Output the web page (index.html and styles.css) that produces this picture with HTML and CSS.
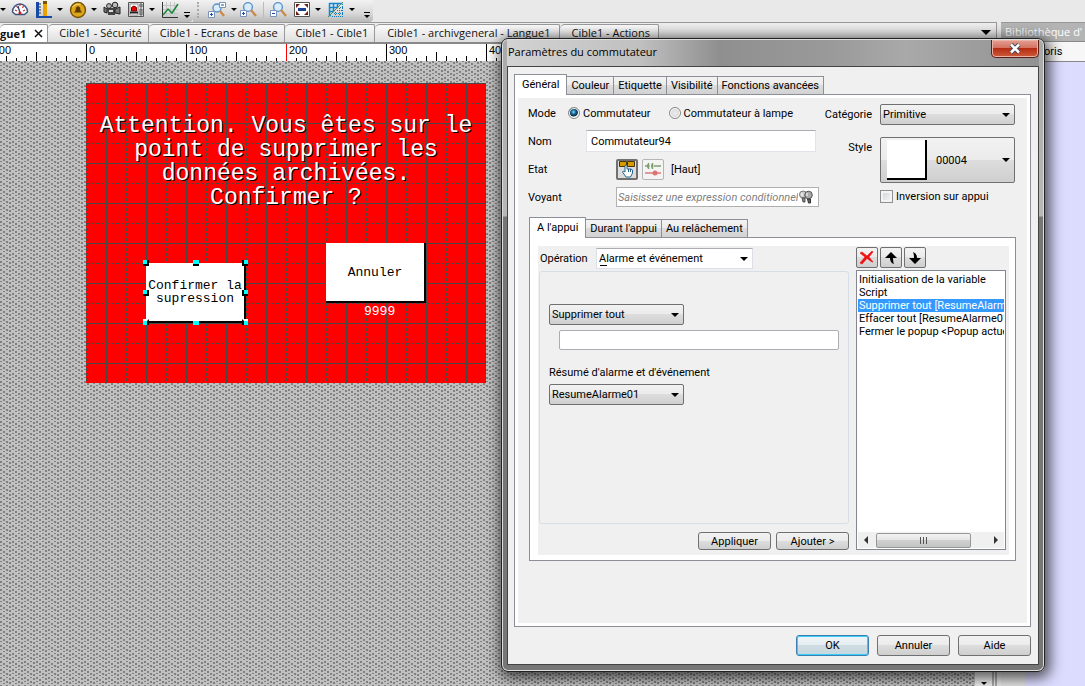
FILE: index.html
```html
<!DOCTYPE html>
<html lang="fr">
<head>
<meta charset="utf-8">
<title>Paramètres du commutateur</title>
<link rel="stylesheet" href="styles.css">
</head>
<body>
<div class="app">
  <header class="toolbars">
    <div class="toolbar toolbar-a">
      <span class="caret"></span>
      <button class="tool" aria-label="Compteur"><svg width="18" height="18" viewBox="0 0 18 18"><path d="M1.500 11a7.500 8 0 1 1 15 0l-3 2.500h-9z" fill="#fff" stroke="#3b4f80" stroke-width="1.4"/><path d="M4 9l2 1M5.500 5l1.500 2M9 3v2M12.500 5l-1 2M14 9l-2 1" stroke="#c33" stroke-width="1.200"/><path d="M9 12L7 5" stroke="#2c3f77" stroke-width="1.3"/><circle cx="9" cy="12" r="1.6" fill="#c22"/></svg></button>
      <button class="tool tool-gap" aria-label="Graphe à barres"><svg width="18" height="18" viewBox="0 0 18 18"><path d="M1 1h3v14h13v2H1z" fill="#1749a6"/><path d="M4 3h2M4 6h2M4 9h2M4 12h2" stroke="#333"/><path d="M8 3h4v12H8z" fill="#e9a300"/><path d="M8 0h4v3H8z" fill="#7a5200"/></svg></button>
      <span class="caret"></span>
      <button class="tool tool-gap" aria-label="Alarme"><svg width="18" height="18" viewBox="0 0 18 18"><circle cx="9" cy="9" r="7.500" fill="#dda51a" stroke="#775106" stroke-width="1.4"/><path d="M5 11.500h8l-1.500-2-.5-3-2-1.500-2 1.500-.5 3z" fill="#5d3b00"/><path d="M3.500 6q3-4 8-3" stroke="#ffe27a" fill="none"/></svg></button>
      <span class="caret"></span>
      <button class="tool tool-gap" aria-label="Caméra"><svg width="18" height="18" viewBox="0 0 18 18"><path d="M4 7h8v7H5z" fill="#444"/><circle cx="6" cy="5" r="2.4" fill="#bbb" stroke="#222"/><circle cx="12" cy="4" r="2.8" fill="#bbb" stroke="#222"/><path d="M12 8l5-2v7l-5-1zM1 6l3 2v4l-3-1z" fill="#777" stroke="#222"/><path d="M6 9h4v2H6z" fill="#ddd"/></svg></button>
      <button class="tool tool-gap" aria-label="Voyant"><svg width="18" height="18" viewBox="0 0 18 18"><path d="M1.500 1.500h15v14h-15z" fill="#ddd" stroke="#555"/><path d="M3 3h8v11H3z" fill="#fff" stroke="#999"/><path d="M4.500 10V6.500q2.500-3 5 0V10z" fill="#e00" stroke="#700"/><path d="M3 11.500h8" stroke="#222" stroke-width="2"/><path d="M13 3h2v3h-2zM13 8h2v6h-2z" fill="#999" stroke="#666"/></svg></button>
      <span class="caret"></span>
      <button class="tool tool-gap" aria-label="Courbe"><svg width="18" height="18" viewBox="0 0 18 18"><path d="M5.500 1v15M9.500 1v15M13.500 1v15M2 4.500h15M2 8.500h15M2 12.500h15" stroke="#c4c4c4"/><path d="M1.500 1v15.500H17" stroke="#333" fill="none"/><path d="M2 14l5-6 4 4 6-9" stroke="#168a3a" stroke-width="1.500" fill="none"/></svg></button>
      <span class="overflow"></span>
    </div>
    <div class="toolbar toolbar-b">
      <span class="grip"></span>
      <button class="tool" aria-label="Zoom"><svg width="20" height="18" viewBox="0 0 20 18"><circle cx="10" cy="7" r="4" fill="#d9ecfb" stroke="#5b91c9" stroke-width="1.400"/><path d="M13 10l4 5" stroke="#c98a4c" stroke-width="2.400"/><path d="M1.500 10.500h6v6h-6zM12.500 1.500h6v5h-6z" fill="#fff" stroke="#7b93bb"/><path d="M3 13.500h3M4.500 12v3M14 4h3" stroke="#1d4da0"/></svg></button>
      <span class="caret"></span>
      <button class="tool tool-near" aria-label="Zoom avant"><svg width="18" height="18" viewBox="0 0 18 18"><circle cx="9" cy="6" r="4.400" fill="#d9ecfb" stroke="#5b91c9" stroke-width="1.400"/><path d="M12 9l5 6" stroke="#c98a4c" stroke-width="2.400"/><path d="M1.500 9.500h6v6h-6z" fill="#fff" stroke="#7b93bb"/><path d="M3 12.500h3M4.500 11v3" stroke="#1d4da0"/></svg></button>
      <span class="divider"></span>
      <button class="tool" aria-label="Zoom arrière"><svg width="18" height="18" viewBox="0 0 18 18"><circle cx="9" cy="6" r="4.400" fill="#d9ecfb" stroke="#5b91c9" stroke-width="1.400"/><path d="M12 9l5 6" stroke="#c98a4c" stroke-width="2.400"/><path d="M1.500 9.500h6v6h-6z" fill="#fff" stroke="#7b93bb"/><path d="M3 12.500h3" stroke="#1d4da0"/></svg></button>
      <button class="tool tool-gap" aria-label="Ajuster"><svg width="18" height="18" viewBox="0 0 18 18"><path d="M1.500 1.500h15v14h-15z" fill="#fff" stroke="#555"/><path d="M3 3h4L3 7zM15 3h-4l4 4zM3 14h4l-4-4zM15 14h-4l4-4z" fill="#701b16"/><path d="M5 7h8v3H5z" fill="#1c3f91"/></svg></button>
      <span class="caret"></span>
      <button class="tool tool-gap" aria-label="Grille"><svg width="18" height="18" viewBox="0 0 18 18"><path d="M2 2.500h13M2 6.500h9M2 10.500h5M2 14.500h2M2.500 2v13M6.500 2v9M10.500 2v5M14.500 2v1" stroke="#1187d4" stroke-width="1.500"/><path d="M7 12.500h9M10 9.500h6M13 6.500h3M15.500 3v12M12.500 7v8M8.500 11v4M5 15.500h11" stroke="#1177bb" stroke-dasharray="1 1"/><path d="M1 16L16 1" stroke="#4f8a4f"/></svg></button>
      <span class="caret"></span>
      <span class="overflow"></span>
    </div>
  </header>

  <div class="workspace">
    <main class="editor">
      <nav class="doc-tabs">
        <a class="doc-tab doc-active" href="#langue1"><span>gue1</span><svg width="9" height="9" viewBox="0 0 9 9"><path d="M1 1l7 7M8 1L1 8" stroke="#111" stroke-width="1.500"/></svg></a>
        <a class="doc-tab" href="#securite">Cible1 - Sécurité</a>
        <a class="doc-tab" href="#ecrans">Cible1 - Ecrans de base</a>
        <a class="doc-tab" href="#cible1">Cible1 - Cible1</a>
        <a class="doc-tab tab-wide" href="#archiv">Cible1 - archivgeneral - Langue1</a>
        <a class="doc-tab tab-wide" href="#actions">Cible1 - Actions</a>
        <span class="caret tabs-caret"></span>
      </nav>
      <div class="ruler">
        <span class="mark">-100</span><span class="mark">0</span><span class="mark">100</span><span class="mark mark-cursor">200</span><span class="mark">300</span><span class="mark">400</span>
      </div>
      <div class="canvas">
        <svg class="weave" width="100%" height="100%" aria-hidden="true">
          <defs><pattern id="weave" width="12" height="8" patternUnits="userSpaceOnUse"><path fill="#c0c0c0" d="M0 0h12v8H0z"/><path fill="#808080" d="M0 0h2v2H0zM6 0h2v1H6zM3 2h2v2H3zM9 1h2v2H9zM0 4h2v1H0zM6 4h2v2H6zM3 6h2v1H3zM9 5h2v2H9z"/></pattern></defs>
          <rect width="100%" height="100%" fill="url(#weave)"/>
        </svg>
        <section class="screen">
          <svg class="grid" width="100%" height="100%" aria-hidden="true">
            <defs><pattern id="grid" width="40" height="40" patternUnits="userSpaceOnUse"><path d="M20.500 0v40M0 .5h40" stroke="#484848"/><path d="M.5 0v40M0 20.500h40" stroke="#484848" stroke-dasharray="3 2"/></pattern></defs>
            <rect width="100%" height="100%" fill="url(#grid)"/>
          </svg>
          <p class="message">Attention. Vous êtes sur le<br>point de supprimer les<br>données archivées.<br>Confirmer ?</p>
          <button class="hmi hmi-confirm">Confirmer la<br>supression
            <i class="h h-nw"></i><i class="h h-n"></i><i class="h h-ne"></i><i class="h h-w"></i><i class="h h-e"></i><i class="h h-sw"></i><i class="h h-s"></i><i class="h h-se"></i>
          </button>
          <button class="hmi hmi-cancel">Annuler</button>
          <span class="popup-id">9999</span>
        </section>
        <div class="vscroll"><span class="caret"></span></div>
      </div>
    </main>
    <aside class="library">
      <h2 class="library-title">Bibliothèque d'</h2>
      <div class="library-tab">Favoris</div>
      <div class="library-body"></div>
    </aside>
  </div>
</div>

<div class="dialog" role="dialog" aria-labelledby="dlg-title">
  <div class="titlebar">
    <h1 id="dlg-title">Paramètres du commutateur</h1>
    <button class="close" aria-label="Fermer"><svg width="14" height="11" viewBox="0 0 14 11"><path d="M3 1.500l8 8M11 1.500l-8 8" stroke="#434e5f" stroke-width="4.500"/><path d="M3 1.500l8 8M11 1.500l-8 8" stroke="#fff" stroke-width="2.500"/></svg></button>
  </div>
  <div class="client">
    <div class="tabs">
      <button class="tab active">Général</button><button class="tab">Couleur</button><button class="tab">Etiquette</button><button class="tab">Visibilité</button><button class="tab">Fonctions avancées</button>
    </div>
    <div class="page">
      <div class="settings">
        <div class="settings-main">
          <div class="row"><span class="lbl lbl-s">Mode</span>
            <label class="radio radio-first"><input type="radio" name="mode" checked>Commutateur</label>
            <label class="radio"><input type="radio" name="mode">Commutateur à lampe</label></div>
          <div class="row"><label class="lbl lbl-m" for="nom">Nom</label><input class="text nom" id="nom" value="Commutateur94"></div>
          <div class="row"><span class="lbl lbl-l">Etat</span>
            <button class="icon-btn pressed" aria-label="Appui"><svg width="18" height="18" viewBox="0 0 18 18"><path d="M1.500 1.500h7v5h-7zM9.500 1.500h7v5h-7z" fill="#d79b00" stroke="#4b3500"/><path d="M7 5.500q1.500-1 2 0V9h4l1.500 1v3l-2 4H8l-3.500-5 1-1L7 12z" fill="#fff" stroke="#246590"/><path d="M10.500 9v3M12.500 9v3" stroke="#246590"/></svg></button>
            <button class="icon-btn faded" aria-label="Contact"><svg width="18" height="18" viewBox="0 0 18 18"><path d="M1 6h3M10 6h7M4.500 3v6M8.500 3v6" stroke="#7d9f70" stroke-width="1.500"/><path d="M3 4l3 2-3 2zM9 6l-2-2v4z" fill="#7d9f70"/><path d="M1 13h16" stroke="#dd7a7a" stroke-width="1.500"/><circle cx="11" cy="13" r="2.500" fill="#dd7272"/></svg></button>
            <span class="state">[Haut]</span></div>
          <div class="row"><label class="lbl lbl-l" for="voyant">Voyant</label>
            <span class="expr"><input id="voyant" placeholder="Saisissez une expression conditionnelle"><svg width="16" height="16" viewBox="0 0 16 16"><circle cx="5" cy="5.500" r="3.500" fill="#ccc" stroke="#777"/><path d="M4 9h3v4H5z" fill="#888" stroke="#555"/><circle cx="10.500" cy="6" r="3.800" fill="#aaa" stroke="#555"/><path d="M9.500 10h3v4h-2z" fill="#666" stroke="#333"/><path d="M4 4v3M9 4v3" stroke="#fff"/></svg></span></div>
        </div>
        <div class="settings-side">
          <label class="lbl-cat" for="cat">Catégorie</label>
          <span class="combo"><select id="cat"><option>Primitive</option></select></span>
          <label class="lbl-style" for="style">Style</label>
          <span class="combo combo-style"><i class="swatch"></i><select id="style"><option>00004</option></select></span>
          <label class="check"><input type="checkbox">Inversion sur appui</label>
        </div>
      </div>

      <div class="events">
        <div class="tabs">
          <button class="tab active">A l'appui</button><button class="tab">Durant l'appui</button><button class="tab">Au relâchement</button>
        </div>
        <div class="event-page">
          <div class="event-body">
            <div class="operation">
              <div class="op-row"><label for="op">Opération</label><span class="combo combo-flat"><select id="op"><option>Alarme et événement</option></select></span></div>
              <fieldset class="group">
                <span class="combo"><select aria-label="Action"><option>Supprimer tout</option></select></span>
                <input class="text param" aria-label="Paramètre">
                <label class="sum" for="resume">Résumé d'alarme et d'événement</label>
                <span class="combo"><select id="resume"><option>ResumeAlarme01</option></select></span>
              </fieldset>
              <div class="op-buttons"><button class="btn">Appliquer</button><button class="btn">Ajouter &gt;</button></div>
            </div>
            <div class="actions">
              <div class="action-tools">
                <button class="icon-btn" aria-label="Supprimer"><svg width="16" height="16" viewBox="0 0 16 16"><path d="M1 3l2-1 5 4 5-5 1 1-4 5 4 5h-1L8 8.500 3 14l-2-1 5-6z" fill="#f01010" stroke="#f01010" stroke-width=".6"/></svg></button>
                <button class="icon-btn" aria-label="Monter"><svg width="16" height="16" viewBox="0 0 16 16"><path d="M8 2l6 6h-4q0 4 1 6-4-1-4-6H2z" fill="#000"/></svg></button>
                <button class="icon-btn" aria-label="Descendre"><svg width="16" height="16" viewBox="0 0 16 16"><path d="M8 14l6-6h-4q0-5-4-6 1 2 1 6H2z" fill="#000"/></svg></button>
              </div>
              <div class="list">
                <ul role="listbox" aria-label="Actions">
                  <li role="option">Initialisation de la variable</li>
                  <li role="option">Script</li>
                  <li role="option" class="selected" aria-selected="true">Supprimer tout [ResumeAlarme01]</li>
                  <li role="option">Effacer tout [ResumeAlarme01]</li>
                  <li role="option">Fermer le popup &lt;Popup actuel&gt;</li>
                </ul>
                <div class="hscroll"><i class="arrow arrow-left"></i><span class="thumb"><i></i><i></i><i></i></span><i class="arrow arrow-right"></i></div>
              </div>
            </div>
          </div>
        </div>
      </div>
    </div>
    <div class="footer"><button class="btn btn-tall default">OK</button><button class="btn btn-tall">Annuler</button><button class="btn btn-tall">Aide</button></div>
  </div>
</div>
</body>
</html>
```
FILE: styles.css
```css
* { box-sizing: border-box; }
html, body { height: 100%; }
body {
  margin: 0;
  overflow: hidden;
  color: #000;
  font: 11px/13px Roboto, "Noto Sans", sans-serif;
}
button, input, select { font: inherit; color: inherit; margin: 0; }
button { padding: 0; }
h1, h2, p, ul { margin: 0; padding: 0; }
svg { display: block; }

/* Application frame */
.app { height: 100%; display: flex; flex-direction: column; background: #e9e9e9; }
.toolbars { display: flex; height: 22px; }
.toolbar {
  display: flex;
  align-items: center;
  height: 22px;
  padding-bottom: 3px;
  background: linear-gradient(#f2f2f2, #d8d8d8 60%, #b8b8b8);
  border-radius: 0 0 4px 0;
}
.toolbar-a { width: 193px; }
.toolbar-b { width: 180px; }
.tool { border: 0; background: none; flex: none; }
.tool-gap { margin-left: 6px; }
.tool-near { margin-left: 2px; }
.caret {
  flex: none;
  width: 6px;
  margin-left: 4px;
  border: 3px solid transparent;
  border-top-color: #000;
  border-bottom: 0;
}
.toolbar > .caret:first-child { margin: 0 5px 0 0; }
.overflow {
  position: relative;
  margin: 14px 3px 0 auto;
  border: 3px solid transparent;
  border-top: 3px solid #000;
  border-bottom: 0;
}
.overflow::before { content: ""; position: absolute; left: -3px; top: -6px; width: 6px; height: 1px; background: #000; }
.grip { width: 2px; height: 16px; margin: 0 8px 0 4px; border-left: 2px dotted #aaa; }
.divider { width: 1px; height: 16px; background: #bbb; margin: 0 5px 0 6px; }

.workspace { flex: 1; display: flex; min-height: 0; gap: 4px; }
.editor { flex: 1; min-width: 0; display: flex; flex-direction: column; }
.doc-tabs {
  display: flex;
  align-items: flex-end;
  height: 20px;
  border-top: 1px solid #999;
  border-right: 1px solid #999;
  background: linear-gradient(#eee, #dcdcdc);
  font: 11px/16px "Open Sans", sans-serif;
}
.doc-tab {
  height: 18px;
  padding: 0 6px 0 11px;
  border: 1px solid #999;
  border-width: 1px 1px 0 0;
  border-radius: 5px 2px 0 0;
  background: linear-gradient(#fafafa, #dfdfdf);
  color: #111;
  text-decoration: none;
  white-space: nowrap;
}
.tab-wide { padding: 0 8px 0 12px; }
.doc-active {
  display: flex;
  align-items: center;
  gap: 8px;
  padding: 0 4px 0 0;
  background: #fff;
  font-weight: 700;
}
.tabs-caret { margin: 0 5px 7px auto; width: 10px; border-width: 5px 5px 0; }

.ruler {
  display: flex;
  height: 19px;
  padding-left: 86px;
  overflow: hidden;
  border-top: 2px solid #888;
  background: #fff;
  font: 11px/12px "Liberation Sans", sans-serif;
}
.mark {
  flex: none;
  width: 100px;
  padding-left: 2px;
  border-left: 1px solid #000;
  background:
    linear-gradient(#000, #000) 49px 100% / 1px 9px no-repeat,
    repeating-linear-gradient(90deg, transparent 0 19px, #000 19px 20px) 0 100% / 100% 5px no-repeat,
    repeating-linear-gradient(90deg, transparent 0 9px, #000 9px 10px) 0 100% / 100% 3px no-repeat;
}
.mark:first-child { margin-left: -100px; }
.mark-cursor { border-color: #f00; }

.canvas { flex: 1; display: flex; justify-content: space-between; align-items: flex-start; position: relative; min-height: 0; }
.weave, .grid { position: absolute; inset: 0; }
.screen {
  position: relative;
  width: 400px;
  height: 300px;
  margin: 22px 0 0 86px;
  background: #f00;
  font-family: "Liberation Mono", monospace;
}
.message {
  position: relative;
  padding-top: 31px;
  color: #fff;
  font-size: 23px;
  line-height: 24px;
  text-align: center;
  text-shadow: 1px 1px #000;
  white-space: nowrap;
}
.hmi {
  position: absolute;
  width: 100px;
  height: 60px;
  border: 0;
  border-right: 2px solid #000;
  border-bottom: 2px solid #000;
  background: #fff;
  font-size: 13px;
  line-height: 13px;
  white-space: nowrap;
}
.hmi-confirm { left: 60px; top: 180px; }
.hmi-cancel { left: 240px; top: 160px; }
.popup-id { position: absolute; left: 278px; top: 222px; color: #fff; font-size: 13px; }
.h { position: absolute; width: 6px; height: 6px; background: #0ff; border-right: 2px solid #000; border-bottom: 2px solid #000; }
.h-nw, .h-n, .h-ne { top: -3px; }
.h-sw, .h-s, .h-se { bottom: -4px; }
.h-w, .h-e { top: 27px; }
.h-nw, .h-w, .h-sw { left: -3px; }
.h-ne, .h-e, .h-se { right: -4px; border-width: 0 0 2px 2px; border-style: solid; border-color: #000; }
.h-n, .h-s { left: 47px; border-right: 0; }
.h-sw, .h-s, .h-se { border-bottom: 0; border-top: 2px solid #fff; }

.vscroll {
  position: relative;
  display: flex;
  align-items: flex-end;
  align-self: stretch;
  width: 22px;
  padding: 0 0 1px 2px;
  border-right: 5px double #aaa;
  background: #eee;
}

.library { width: 84px; display: flex; flex-direction: column; overflow: hidden; }
.library-title {
  height: 19px;
  padding-left: 4px;
  border-top: 1px solid #999;
  background: #b4b4b4;
  color: #fff;
  font: 11px/17px "Open Sans", sans-serif;
  white-space: nowrap;
}
.library-tab {
  height: 21px;
  padding-left: 26px;
  border: 1px solid #888;
  border-width: 1px 0;
  background: #f7f7f7;
  line-height: 19px;
}
.library-body { flex: 1; border-left: 24px solid #e2e2e2; background: #dcdcff; }

/* Dialog window */
.dialog {
  position: absolute;
  left: 501px;
  top: 38px;
  width: 544px;
  padding: 0 5px 6px;
  border: 1px solid #222;
  border-radius: 7px;
  background: linear-gradient(#a9a9a9 0, #b8b8b8 177px, #777 178px, #777);
  box-shadow: inset 0 0 0 1px #ddd, 2px 3px 14px 3px rgba(0, 0, 0, .65);
}
.titlebar {
  display: flex;
  justify-content: space-between;
  align-items: flex-start;
  height: 26px;
  margin-top: 1px;
  background: linear-gradient(90deg, #d2d2d2, #c0c0c0 25%, #8f8f8f 40%, #999 60%, #a9a9a9 75%, #929292);
}
h1 { padding-left: 1px; font: 11px/24px "Open Sans", sans-serif; }
.close {
  display: flex;
  align-items: center;
  justify-content: center;
  width: 48px;
  height: 18px;
  border: 1px solid #5a1d15;
  border-top: 0;
  border-radius: 0 0 5px 5px;
  background: linear-gradient(#e4a093, #d3705d 48%, #b52c12 50%, #cf5b3b);
  box-shadow: inset 0 0 0 1px #eab3a8;
}
.client { border: 1px solid #444; background: #f0f0f0; padding: 7px 7px 8px 6px; }

.tabs { display: flex; align-items: flex-end; }
.tab {
  height: 18px;
  padding: 0 4px;
  border: 1px solid #8c8e98;
  border-left-width: 0;
  border-bottom: 0;
  background: linear-gradient(#f3f3f3, #ebebeb 50%, #dcdcdc 50%, #d2d2d2);
  white-space: nowrap;
}
.tab.active {
  position: relative;
  height: 21px;
  margin-bottom: -1px;
  padding: 0 7px 2px;
  border-left-width: 1px;
  background: #fff;
}
.page {
  min-height: 533px;
  padding: 4px 14px 0 11px;
  border: 1px solid #8c8e98;
  background: #f0f0f0;
  box-shadow: inset 0 0 0 3px #fff;
}

.settings { display: flex; justify-content: space-between; padding: 0 1px 0 2px; }
.row { display: flex; align-items: center; height: 28px; }
.lbl { flex: none; }
.lbl-s { width: 40px; }
.lbl-m { width: 58px; }
.lbl-l { width: 88px; }
.radio { display: flex; align-items: center; gap: 3px; }
.radio-first { margin-right: 18px; }
.radio input {
  appearance: none;
  width: 12px;
  height: 12px;
  border: 1px solid #888;
  border-radius: 50%;
  background: radial-gradient(#eee, #ccc);
  box-shadow: inset 0 0 0 1px #fff;
}
.radio input:checked { background: radial-gradient(circle at 45% 40%, #8de0fa 0, #1873a5 2px, #0b2948 4px, #eee 5px); }
.text { height: 22px; padding: 0 4px; border: 1px solid #e0e3ea; border-top-color: #abadb3; background: #fff; }
.nom { width: 230px; }
.icon-btn {
  display: flex;
  align-items: center;
  justify-content: center;
  width: 22px;
  height: 21px;
  border: 1px solid #707070;
  border-radius: 2px;
  background: linear-gradient(#f2f2f2, #ebebeb 50%, #dddddd 50%, #cfcfcf);
}
.pressed { border-width: 2px; background: #ddd; }
.faded { margin: 0 7px 0 4px; border-color: #b5b5b5; background: #f4f4f4; }
.expr {
  display: flex;
  align-items: center;
  width: 203px;
  height: 20px;
  padding: 0 4px 0 1px;
  border: 1px solid #b0b0b0;
  background: #fff;
}
.expr input { flex: 1; min-width: 0; padding: 0; border: 0; outline: 0; font-style: italic; }
.expr input::placeholder { color: #808080; }

.settings-side {
  display: grid;
  grid-template-columns: auto 135px;
  column-gap: 8px;
  align-content: start;
  padding-top: 5px;
}
.lbl-cat, .lbl-style { padding-top: 4px; text-align: right; }
.lbl-style { padding-top: 16px; }
.combo { position: relative; display: block; width: 135px; height: 21px; }
.combo::after {
  content: "";
  position: absolute;
  right: 5px;
  top: 50%;
  margin-top: -2px;
  border: 4px solid transparent;
  border-top-color: #000;
  border-bottom: 0;
  pointer-events: none;
}
.combo select {
  appearance: none;
  width: 100%;
  height: 100%;
  padding: 0 16px 0 2px;
  border: 1px solid #707070;
  border-radius: 2px;
  background: linear-gradient(#f2f2f2, #ebebeb 50%, #dddddd 50%, #cfcfcf);
}
.combo-style { height: 46px; margin-top: 12px; }
.combo-style select { padding-left: 55px; }
.swatch {
  position: absolute;
  left: 7px;
  top: 3px;
  width: 40px;
  height: 40px;
  border: 2px solid #000;
  border-width: 0 2px 2px 0;
  background: #fff;
}
.check { grid-column: 2; display: flex; align-items: center; gap: 3px; margin-top: 7px; white-space: nowrap; }
.check input {
  appearance: none;
  flex: none;
  width: 13px;
  height: 13px;
  border: 1px solid #8e8f8f;
  background: linear-gradient(135deg, #cfd3d8, #f6f6f6);
  box-shadow: inset 0 0 0 2px #f4f4f4;
}

.events { margin-top: 6px; margin-left: 3px; }
.event-page { border: 1px solid #8c8e98; background: #fff; padding: 8px 6px 5px 8px; }
.event-body { display: flex; gap: 7px; background: #f0f0f0; padding: 1px 3px 5px 0; }
.operation { flex: 1; min-width: 0; display: flex; flex-direction: column; padding-left: 1px; }
.op-row { display: flex; align-items: center; justify-content: space-between; width: 214px; padding: 1px 0 2px 1px; }
.combo-flat { width: 157px; }
.combo-flat select { border-color: #abadb3 #dcdfe6 #dcdfe6; border-radius: 0; background: #fff; }
.combo-flat::before { content: ""; position: absolute; left: 4px; bottom: 3px; width: 7px; height: 1px; background: #000; }
.group {
  flex: 1;
  min-width: 0;
  margin: 0;
  padding: 32px 9px;
  border: 1px solid #d5dfe5;
  border-radius: 3px;
}
.param { display: block; width: calc(100% - 10px); height: 20px; margin: 5px 0 16px 10px; border-color: #abadb3; border-radius: 2px; }
.sum { display: block; margin-bottom: 5px; }
.op-buttons { display: flex; justify-content: flex-end; gap: 5px; padding-top: 8px; }
.btn {
  width: 73px;
  height: 18px;
  border: 1px solid #707070;
  border-radius: 3px;
  background: linear-gradient(#f2f2f2, #ebebeb 50%, #dddddd 50%, #cfcfcf);
}
.btn-tall { height: 21px; }
.default { border-color: #3c7fb1; background: linear-gradient(#f0f5f8, #e3edf1 50%, #cfdde3 50%, #c5d7df); box-shadow: inset 0 0 0 1px #36cdf8; }

.actions { width: 150px; display: flex; flex-direction: column; }
.action-tools { display: flex; gap: 2px; margin-bottom: 2px; }
.list { display: flex; flex-direction: column; height: 280px; padding: 2px 1px 1px; border: 1px solid #828790; background: #fff; }
.list ul { flex: 1; list-style: none; overflow: hidden; }
.list li { height: 13px; padding-left: 1px; white-space: nowrap; }
.list .selected { background: #3399ff; color: #fff; }
.hscroll { display: flex; align-items: center; height: 16px; padding: 0 6px; background: #f0f0f0; }
.arrow { border: 4px solid transparent; }
.arrow-left { border-right-color: #333; border-left: 0; }
.arrow-right { border-left-color: #333; border-right: 0; margin-left: auto; }
.thumb {
  display: flex;
  align-items: center;
  justify-content: center;
  gap: 2px;
  width: 95px;
  height: 15px;
  margin-left: 8px;
  border: 1px solid #979797;
  border-radius: 2px;
  background: linear-gradient(#f3f3f3, #e4e4e4 50%, #d0d0d0 50%, #c4c4c4);
}
.thumb i { width: 1px; height: 7px; background: #555; }
.footer { display: flex; justify-content: flex-end; gap: 8px; padding-top: 8px; }
```
